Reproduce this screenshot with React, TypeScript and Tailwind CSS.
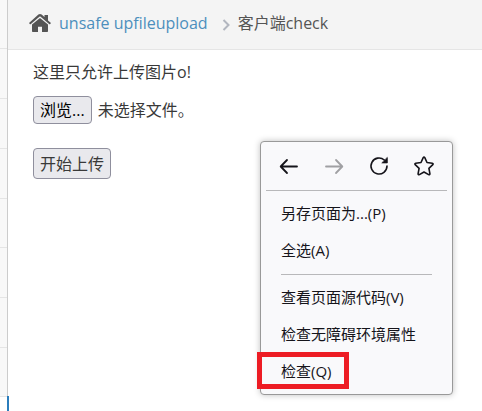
import { useRef, useState } from "react";
import type { ReactNode } from "react";

const sidebarRows = [0, 1, 2, 3, 4, 5, 6];

function HomeIcon() {
  return (
    <svg viewBox="0 0 22 18" className="h-[18px] w-[22px] fill-[#555]" aria-hidden="true">
      <path d="M11 0c.6 0 1.100.2 1.600.6l2.900 2.400V1h3.500v5.400l2.700 2.300c.2.2.2.4.1.6l-.8.9c-.2.2-.4.2-.6 0L11.300 2.500a.5.5 0 0 0-.6 0L1.600 10.200c-.2.2-.4.2-.6 0l-.8-.9c-.1-.2-.1-.4.1-.6L9.400.6C9.900.2 10.400 0 11 0z" />
      <path d="M11 3.900l8 6.600V17c0 .6-.4 1-1 1h-5v-5.300H9V18H4c-.6 0-1-.4-1-1v-6.500z" />
    </svg>
  );
}

function BackIcon() {
  return (
    <svg viewBox="0 0 20 20" className="size-5" fill="none" stroke="currentColor" strokeWidth="1.800" strokeLinecap="round" strokeLinejoin="round">
      <path d="M18 10.500H2M8 4L1.700 10.500 8 17" />
    </svg>
  );
}

function ForwardIcon() {
  return (
    <svg viewBox="0 0 20 20" className="size-5" fill="none" stroke="currentColor" strokeWidth="1.800" strokeLinecap="round" strokeLinejoin="round">
      <path d="M2 10.500H18M12 4l6.300 6.500L12 17" />
    </svg>
  );
}

function ReloadIcon() {
  return (
    <svg viewBox="0 0 20 20" className="size-5" fill="none" stroke="currentColor" strokeWidth="1.600" strokeLinecap="round">
      <path d="M15.300 4A8 8 0 1 0 18 10" />
      <path d="M18.300 1.800v5.100h-5.100z" fill="currentColor" strokeWidth=".8" strokeLinejoin="round" />
    </svg>
  );
}

function StarIcon() {
  return (
    <svg viewBox="0 0 20 20" className="size-5" fill="none" stroke="currentColor" strokeWidth="1.600" strokeLinejoin="round">
      <path d="M9.200 1.600q.8-1.200 1.600 0l2.200 4.900 5.300.7q1.300.4.500 1.500l-3.900 3.700 1 5.300q0 1.400-1.300.9L10 16l-4.600 2.600q-1.300.500-1.300-.9l1-5.300-3.900-3.700q-.8-1.100.5-1.500l5.300-.7z" />
    </svg>
  );
}

function MenuItem({ children }: { children: ReactNode }) {
  return (
    <button type="button" role="menuitem" className="flex h-[37px] w-full items-center px-5 text-left hover:bg-[#e0e0e6]">
      {children}
    </button>
  );
}

function ContextMenu() {
  return (
    <div
      role="menu"
      className="absolute top-[141px] left-[260px] w-[193px] rounded border border-[#999] bg-[#f9f9fb] pb-1 text-[15px] text-[#15141a] shadow-[0_0_6px_rgba(0,0,0,0.25)]"
    >
      <div className="mx-[5px] flex h-12 items-center">
        <button type="button" aria-label="后退" className="flex flex-1 justify-center">
          <BackIcon />
        </button>
        <button type="button" aria-label="前进" disabled className="flex flex-1 justify-center text-[#a0a0a3]">
          <ForwardIcon />
        </button>
        <button type="button" aria-label="重新载入" className="flex flex-1 justify-center">
          <ReloadIcon />
        </button>
        <button type="button" aria-label="添加书签" className="flex flex-1 justify-center">
          <StarIcon />
        </button>
      </div>
      <hr className="mx-[5px] mb-1 border-[#b8b8ba]" />
      <MenuItem>另存页面为...(P)</MenuItem>
      <MenuItem>全选(A)</MenuItem>
      <hr className="mx-5 mt-[5px] mb-1 border-[#b8b8ba]" />
      <MenuItem>查看页面源代码(V)</MenuItem>
      <MenuItem>检查无障碍环境属性</MenuItem>
      <div className="relative">
        <MenuItem>检查(Q)</MenuItem>
        {/* red marker around the inspect entry */}
        <div className="pointer-events-none absolute -top-px -left-1 h-[37px] w-[92px] border-5 border-[#ed1c24]" />
      </div>
    </div>
  );
}

export default function App() {
  const fileRef = useRef<HTMLInputElement>(null);
  const [fileName, setFileName] = useState("未选择文件。");

  return (
    <div className="relative flex min-h-screen bg-white font-['Open_Sans','Noto_Sans_CJK_SC',sans-serif] text-base text-[#393939]">
      {/* edge of the sidebar */}
      <aside className="flex w-2 shrink-0 flex-col">
        <div className="border-r border-[#ccc] bg-[#f8f8f8]">
          <div className="h-[49px] border-b border-[#e5e5e5]" />
          {sidebarRows.map((row) => (
            <div key={row} className={row === 3 || row === 6 ? "h-[49px] border-b border-[#e5e5e5]" : "h-[50px] border-b border-[#e5e5e5]"} />
          ))}
        </div>
        <div className="-mt-px -mr-px flex-1 border-r-2 border-[#2b7dbc]" />
      </aside>

      <main className="min-w-0 flex-1">
        <nav className="flex h-[50px] items-center border-b border-[#e5e5e5] bg-[#f4f4f4] pb-1 pl-[21px]">
          <HomeIcon />
          <a href="#" className="ml-2 text-[#4c8fbd] hover:underline">
            unsafe upfileupload
          </a>
          <svg viewBox="0 0 8 12" className="mt-1 mr-2 ml-3.5 h-3 w-2" fill="none" stroke="#b2b6bf" strokeWidth="2" aria-hidden="true">
            <path d="M1.500 1l5 5-5 5" />
          </svg>
          <span className="text-[#555]">客户端check</span>
        </nav>

        <form className="flex flex-col items-start pt-2.5 pl-[25px]" onSubmit={(e) => e.preventDefault()}>
          <p className="leading-6">这里只允许上传图片o!</p>
          <div className="mt-3 flex items-center gap-1.5">
            <button
              type="button"
              onClick={() => fileRef.current?.click()}
              className="h-7 rounded border border-[#8f8f9d] bg-[#e9e9ed] px-1.5 leading-6 text-black"
            >
              浏览...
            </button>
            <label htmlFor="upload_file">{fileName}</label>
            <input
              ref={fileRef}
              id="upload_file"
              type="file"
              className="hidden"
              onChange={(e) => setFileName(e.target.files?.[0]?.name ?? "未选择文件。")}
            />
          </div>
          <button type="submit" className="mt-6 h-[31px] rounded border border-[#8f8f9d] bg-[#e9e9ed] px-1.5">
            开始上传
          </button>
        </form>
      </main>

      <ContextMenu />
    </div>
  );
}
